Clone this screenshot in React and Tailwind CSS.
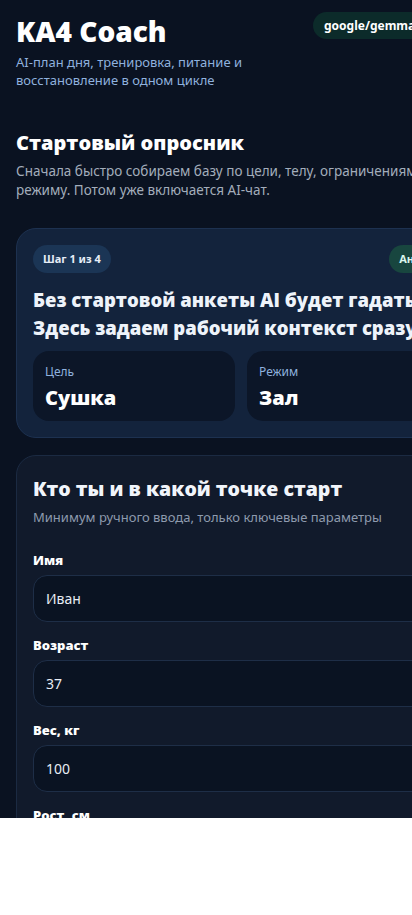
const heavy = { fontFamily: '"Open Sans", "Noto Sans", sans-serif' };

export default function App() {
  const fields = [
    { label: "Имя", value: "Иван" },
    { label: "Возраст", value: "37" },
    { label: "Вес, кг", value: "100" },
    { label: "Рост, см", value: "182" },
    { label: "Пол", value: "Мужской" },
  ];

  return (
    <div
      className="h-[818px] w-full overflow-hidden bg-[#0a1221] text-white"
      style={{ fontFamily: '"Noto Sans", "Open Sans", sans-serif' }}
    >
      <div className="w-[482px] px-4 pt-3">
        {/* header */}
        <header className="flex items-start gap-3">
          <div className="w-[285px] shrink-0 pt-[2px]">
            <h1 style={heavy} className="text-[28px] font-extrabold leading-[34px] text-white">
              KA4 Coach
            </h1>
            <p className="mt-[5px] text-[13px] leading-[18px] text-[#8fb1de]">
              AI-план дня, тренировка, питание и восстановление в одном цикле
            </p>
          </div>
          <span className="inline-flex h-[27px] shrink-0 items-center whitespace-nowrap rounded-full bg-[#0c2b2a] px-[11px] text-[12px] font-bold text-white">
            google/gemma-3-4b-it
          </span>
        </header>

        {/* intro */}
        <section className="mt-[40px]">
          <h2 style={heavy} className="text-[20px] font-extrabold leading-[28px] text-white">
            Стартовый опросник
          </h2>
          <p className="mt-[5px] text-[13.5px] leading-[19px] text-[#a3adbb]">
            Сначала быстро собираем базу по цели, телу, ограничениям и режиму. Потом уже включается AI-чат.
          </p>
        </section>

        {/* step card */}
        <section className="mt-[28px] rounded-[20px] border border-[#1d3150] bg-[#13233c] p-4">
          <div className="flex items-center justify-between">
            <span className="inline-flex h-[28px] items-center rounded-full bg-[#1b3555] px-[10px] text-[11px] font-bold text-[#e6edf7]">
              Шаг 1 из 4
            </span>
            <span className="inline-flex h-[28px] items-center rounded-full bg-[#18463f] px-[10px] text-[11px] font-bold text-[#d9f5ec]">
              Анкета
            </span>
          </div>
          <h3 style={heavy} className="mt-[13px] text-[18.5px] font-extrabold leading-[28px] text-[#eef3fa]">
            Без стартовой анкеты AI будет гадать. Здесь задаем рабочий контекст сразу.
          </h3>
          <div className="mt-[9px] grid grid-cols-2 gap-3">
            <div className="rounded-[16px] bg-[#0c1628] px-3 pb-[9px] pt-[13px]">
              <div className="text-[12px] leading-[16px] text-[#8fb1de]">Цель</div>
              <div style={heavy} className="mt-[4px] text-[20px] font-extrabold leading-[28px] text-white">Сушка</div>
            </div>
            <div className="rounded-[16px] bg-[#0c1628] px-3 pb-[9px] pt-[13px]">
              <div className="text-[12px] leading-[16px] text-[#8fb1de]">Режим</div>
              <div style={heavy} className="mt-[4px] text-[20px] font-extrabold leading-[28px] text-white">Зал</div>
            </div>
          </div>
        </section>

        {/* profile form */}
        <section className="mt-[17px] rounded-[20px] border border-[#1b2a42] bg-[#111a2b] px-4 pb-6 pt-[18px]">
          <h3 style={heavy} className="text-[19.5px] font-extrabold leading-[30px] text-[#f1f5fb]">
            Кто ты и в какой точке старт
          </h3>
          <p className="mt-[4px] text-[13px] leading-[18px] text-[#8e9aae]">
            Минимум ручного ввода, только ключевые параметры
          </p>
          <div className="mt-[25px] flex flex-col gap-[14px]">
            {fields.map((f) => (
              <label key={f.label} className="flex flex-col gap-[6px]">
                <span style={heavy} className="text-[13px] font-extrabold leading-[18px] text-white">{f.label}</span>
                <div className="flex h-[47px] items-center rounded-[14px] border border-[#1e2e47] bg-[#0a1322] px-3 text-[14px] text-[#e8edf5]">
                  {f.value}
                </div>
              </label>
            ))}
          </div>
        </section>
      </div>
    </div>
  );
}
